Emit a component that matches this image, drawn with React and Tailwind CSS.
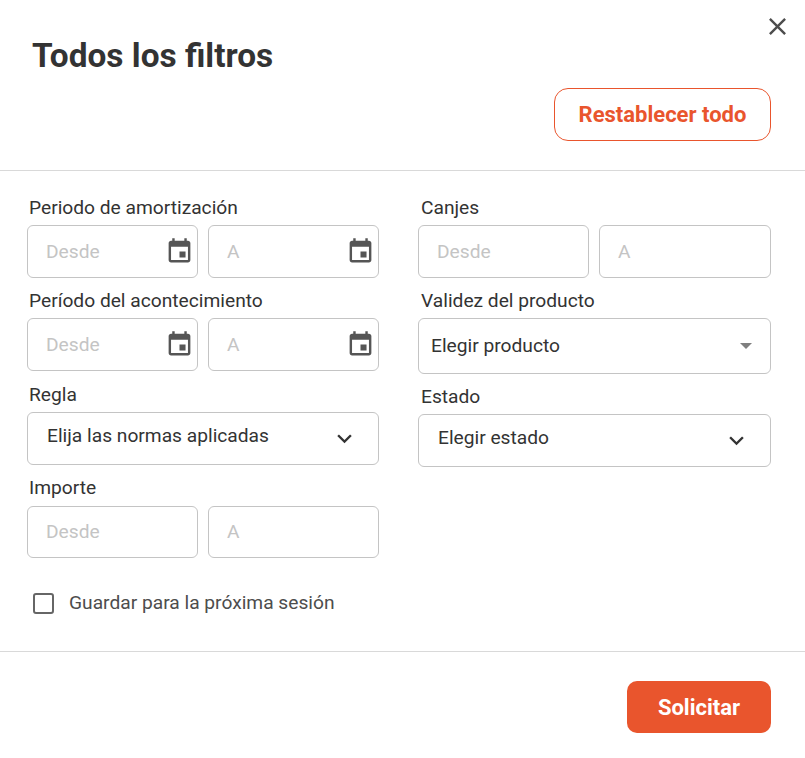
import React from 'react';

const CalendarIcon = () => (
  <svg viewBox="0 0 24 24" className="w-[29px] h-[29px] shrink-0 fill-[#555555]">
    <path d="M17 12h-5v5h5v-5zM16 1v2H8V1H6v2H5c-1.11 0-1.99.9-1.99 2L3 19c0 1.1.89 2 2 2h14c1.1 0 2-.9 2-2V5c0-1.1-.9-2-2-2h-1V1h-2zm3 18H5V8h14v11z" />
  </svg>
);

const Chevron = () => (
  <svg viewBox="0 0 24 24" className="w-[29px] h-[29px] fill-[#333333]">
    <path d="M7.41 8.59 12 13.17l4.59-4.58L18 10l-6 6-6-6 1.41-1.41z" />
  </svg>
);

const Label = ({ children, className = '' }) => (
  <div className={`text-[19.2px] leading-[24px] text-[#333333] ${className}`}>{children}</div>
);

const RangeInput = ({ placeholder, icon, textClass, className = '' }) => (
  <div className={`flex items-center justify-between pl-[18px] pr-[3px] border border-[#c4c4c4] rounded-md ${className}`}>
    <span className={`text-[19.2px] text-[#c4c4c4] ${textClass}`}>{placeholder}</span>
    {icon && <CalendarIcon />}
  </div>
);

const Range = ({ icons, height = 'h-[53px]', textClass = 'pt-[2px]' }) => (
  <div className="flex gap-[10px]">
    <RangeInput placeholder="Desde" icon={icons} textClass={textClass} className={`w-[171px] shrink-0 ${height}`} />
    <RangeInput placeholder="A" icon={icons} textClass={textClass} className={`flex-1 ${height}`} />
  </div>
);

const SelectBox = ({ text }) => (
  <div className="h-[53px] flex items-center justify-between pl-[19px] pr-[19px] border border-[#c4c4c4] rounded-md text-[19.2px] text-[#333333]">
    <span className="pb-[4px]">{text}</span>
    <Chevron />
  </div>
);

export default function App() {
  return (
    <div className="relative w-[805px] h-[758px] bg-white font-['Roboto',sans-serif]">
      <button className="absolute top-[12px] right-[13px] w-[29px] h-[29px]">
        <svg viewBox="0 0 24 24" className="w-[29px] h-[29px] fill-[#4d4d4d]">
          <path d="M19 6.41 17.59 5 12 10.59 6.41 5 5 6.41 10.59 12 5 17.59 6.41 19 12 13.41 17.59 19 19 17.59 13.41 12z" />
        </svg>
      </button>

      <header className="h-[171px] border-b border-[#d9d9d9] pt-[36px] pr-[34px] pl-[32px]">
        <h1 className="text-[33.4px] leading-[40px] font-bold text-[#333333]">Todos los filtros</h1>
        <div className="flex justify-end mt-[12px]">
          <button className="w-[217px] h-[53px] border border-[#e9552d] rounded-[14px] text-[22px] font-bold text-[#e9552d]">
            Restablecer todo
          </button>
        </div>
      </header>

      <main className="h-[481px] border-b border-[#d9d9d9] pl-[27px] pr-[34px] pt-[25px]">
        <div className="flex gap-[39px]">
          <div className="w-[352px]">
            <Label className="pl-[2px] mb-[5px]">Periodo de amortización</Label>
            <Range icons />
            <Label className="pl-[2px] mt-[11px] mb-[5px]">Período del acontecimiento</Label>
            <Range icons />
            <Label className="pl-[2px] mt-[12px] mb-[5px]">Regla</Label>
            <SelectBox text="Elija las normas aplicadas" />
            <Label className="pl-[2px] mt-[11px] mb-[6px]">Importe</Label>
            <Range height="h-[52px]" textClass="" />
          </div>
          <div className="w-[353px]">
            <Label className="pl-[3px] mb-[5px]">Canjes</Label>
            <Range />
            <Label className="pl-[3px] mt-[11px] mb-[5px]">Validez del producto</Label>
            <div className="h-[56px] flex items-center justify-between pl-[12px] pr-[18px] border border-[#c4c4c4] rounded-md text-[19.2px] text-[#333333]">
              <span>Elegir producto</span>
              <span className="w-0 h-0 border-x-[6px] border-x-transparent border-t-[6px] border-t-[#7f7f7f]"></span>
            </div>
            <Label className="pl-[3px] mt-[11px] mb-[5px]">Estado</Label>
            <SelectBox text="Elegir estado" />
          </div>
        </div>
        <div className="flex items-center mt-[31px] pl-[6px]">
          <span className="w-[21px] h-[21px] border-2 border-[#666666] rounded-[3px]"></span>
          <span className="ml-[15px] text-[19.2px] text-[#4d4d4d]">Guardar para la próxima sesión</span>
        </div>
      </main>

      <footer className="flex justify-end pt-[29px] pr-[34px]">
        <button className="w-[144px] h-[52px] bg-[#e9552d] rounded-[10px] text-[22px] font-bold text-white">
          Solicitar
        </button>
      </footer>
    </div>
  );
}
